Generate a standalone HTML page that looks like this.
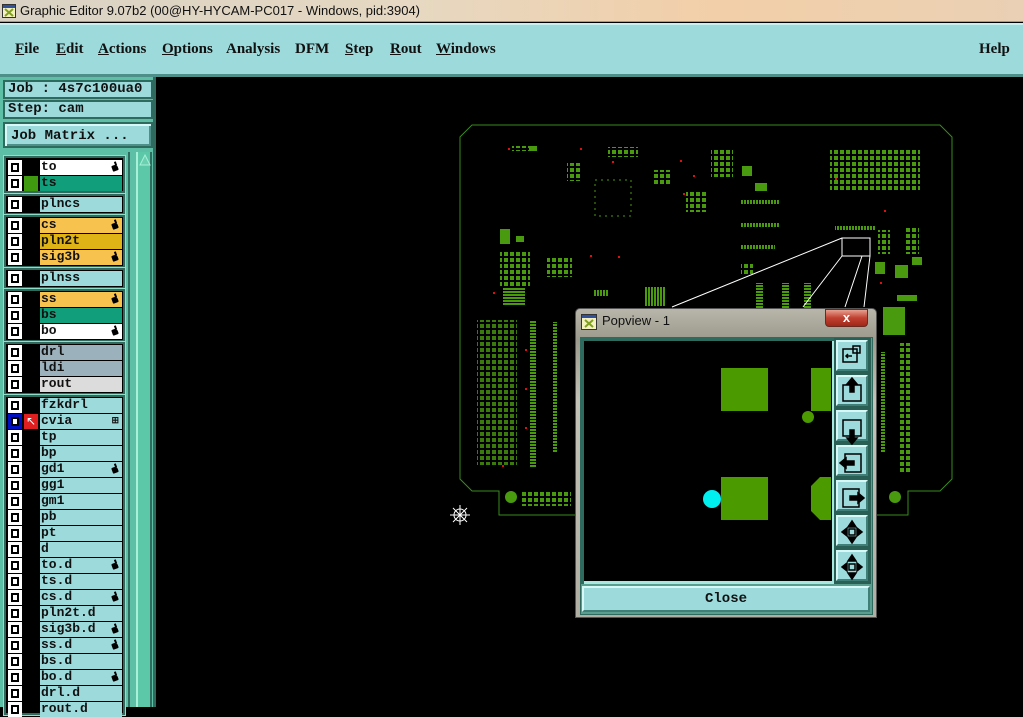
<!DOCTYPE html>
<html><head><meta charset="utf-8"><style>
*{margin:0;padding:0;box-sizing:border-box}
body{width:1023px;height:707px;overflow:hidden;background:#000;position:relative;font-family:"Liberation Sans",sans-serif}
.abs{position:absolute}
#title{left:0;top:0;width:1023px;height:22px;background:linear-gradient(90deg,#d9d2c4 0%,#e6d8c2 40%,#f2cfa8 70%,#ead0b4 100%);border-bottom:1px solid #9a9a9a}
#title span{position:absolute;left:20px;top:3px;font-size:13px;color:#111}
#menu{left:0;top:23px;width:1023px;height:54px;background:#9cdadb;border-top:2px solid #c8f0f0;border-bottom:3px solid #4f8f8a}
#menu b{position:absolute;top:16px;font:bold 15px "Liberation Serif",serif;color:#111}
#menu b u{text-decoration:underline}
#left{left:0;top:77px;width:155px;height:630px;background:#5cbfa6}
.fld{position:absolute;left:3px;width:150px;height:19px;background:#9cdadb;border:2px solid #2e6b5e;font:bold 14px "Liberation Mono",monospace;color:#111;padding-left:3px;line-height:15px}
.grp{position:absolute;left:4px;width:121px;background:#000;border:2px solid #2e6b5e;outline:1px solid #8fe0c8}
.r{position:absolute;left:8px;height:15px;width:114px}
.cb{position:absolute;left:0;top:0;width:14px;height:15px;background:#fff}
.cb i{position:absolute;left:3px;top:3px;width:8px;height:9px;border:2px solid #000}
.nm{position:absolute;left:32px;top:0;width:82px;height:15px;background:#9cdadb;font:bold 13px "Liberation Mono",monospace;color:#111;line-height:14px;padding-left:1px}
.nm em{position:absolute;right:4px;top:5px;width:6px;height:6px;background:#000;border-radius:1px 3px 1px 1px;transform:rotate(-20deg)}
.nm em:after{content:"";position:absolute;left:4px;top:-3px;width:2px;height:4px;background:#000}
</style></head><body>
<div id="title" class="abs"><svg class="abs" style="left:2px;top:4px" width="14" height="14"><rect x="0.5" y="0.5" width="13" height="13" fill="#f4f0c0" stroke="#333"/><rect x="1" y="1" width="12" height="3" fill="#3050a0"/><path d="M3 5 L11 12 M11 5 L3 12" stroke="#80a020" stroke-width="2"/></svg><span>Graphic Editor 9.07b2 (00@HY-HYCAM-PC017 - Windows, pid:3904)</span></div>
<div id="menu" class="abs">
<b style="left:15px"><u>F</u>ile</b><b style="left:56px"><u>E</u>dit</b><b style="left:98px"><u>A</u>ctions</b><b style="left:162px"><u>O</u>ptions</b><b style="left:226px">Analysis</b><b style="left:295px">DFM</b><b style="left:345px"><u>S</u>tep</b><b style="left:390px"><u>R</u>out</b><b style="left:436px"><u>W</u>indows</b><b style="left:979px">Help</b>
</div>
<div id="left" class="abs"></div>
<div class="fld" style="top:80px">Job : 4s7c100ua0</div>
<div class="fld" style="top:100px">Step: cam</div>
<div class="abs" style="left:3px;top:122px;width:150px;height:26px;background:#9cdadb;border:2px solid #2e6b5e;box-shadow:inset 2px 2px #d8f8f8,inset -2px -2px #4f8f8a;font:bold 14px 'Liberation Mono',monospace;padding:4px 0 0 6px;color:#111">Job Matrix ...</div>
<div class="abs" style="left:128px;top:152px;width:26px;height:555px;background:#5cbfa6;border-left:2px solid #2e6b5e"></div>
<div class="abs" style="left:136px;top:152px;width:16px;height:555px;background:#5cc8a8;border-left:2px solid #a8f0d8;border-right:2px solid #2e6b5e"></div>
<svg class="abs" style="left:139px;top:154px" width="12" height="12"><path d="M6 1 L11 11 L1 11Z" fill="#6ad0b0" stroke="#a8f0d8"/></svg>
<div class="abs" style="left:153px;top:77px;width:3px;height:630px;background:#2e6b5e"></div>

<div class="grp" style="top:156px;height:37px"></div>
<div class="grp" style="top:194px;height:21px"></div>
<div class="grp" style="top:215px;height:53px"></div>
<div class="grp" style="top:268px;height:21px"></div>
<div class="grp" style="top:289px;height:53px"></div>
<div class="grp" style="top:342px;height:53px"></div>
<div class="grp" style="top:395px;height:320px"></div>

<div class="r" style="top:160px"><div class="cb"><i></i></div><div class="nm" style="background:#fff">to<em></em></div></div>
<div class="r" style="top:176px"><div class="cb"><i></i></div><div class="abs" style="left:16px;top:0;width:14px;height:15px;background:#3f9a10"></div><div class="nm" style="background:#119e7a">ts</div></div>
<div class="r" style="top:197px"><div class="cb"><i></i></div><div class="nm">plncs</div></div>
<div class="r" style="top:218px"><div class="cb"><i></i></div><div class="nm" style="background:#f8c24f">cs<em></em></div></div>
<div class="r" style="top:234px"><div class="cb"><i></i></div><div class="nm" style="background:#dfb316">pln2t</div></div>
<div class="r" style="top:250px"><div class="cb"><i></i></div><div class="nm" style="background:#f8c24f">sig3b<em></em></div></div>
<div class="r" style="top:271px"><div class="cb"><i></i></div><div class="nm">plnss</div></div>
<div class="r" style="top:292px"><div class="cb"><i></i></div><div class="nm" style="background:#f8c24f">ss<em></em></div></div>
<div class="r" style="top:308px"><div class="cb"><i></i></div><div class="nm" style="background:#119e7a">bs</div></div>
<div class="r" style="top:324px"><div class="cb"><i></i></div><div class="nm" style="background:#fff">bo<em></em></div></div>
<div class="r" style="top:345px"><div class="cb"><i></i></div><div class="nm" style="background:#9bb1bb">drl</div></div>
<div class="r" style="top:361px"><div class="cb"><i></i></div><div class="nm" style="background:#9bb1bb">ldi</div></div>
<div class="r" style="top:377px"><div class="cb"><i></i></div><div class="nm" style="background:#dcdcdc">rout</div></div>
<div class="r" style="top:398px"><div class="cb"><i></i></div><div class="nm">fzkdrl</div></div>
<div class="r" style="top:414px"><div class="cb" style="background:#0010c0"><i style="background:#fff"></i></div><div class="abs" style="left:16px;top:0;width:14px;height:15px;background:#e02020;color:#fff;font-size:12px;line-height:15px;text-align:center">&#8598;</div><div class="nm">cvia<span style="position:absolute;right:3px;top:0;font-size:9px">&#8862;</span></div></div>
<div class="r" style="top:430px"><div class="cb"><i></i></div><div class="nm">tp</div></div>
<div class="r" style="top:446px"><div class="cb"><i></i></div><div class="nm">bp</div></div>
<div class="r" style="top:462px"><div class="cb"><i></i></div><div class="nm">gd1<em></em></div></div>
<div class="r" style="top:478px"><div class="cb"><i></i></div><div class="nm">gg1</div></div>
<div class="r" style="top:494px"><div class="cb"><i></i></div><div class="nm">gm1</div></div>
<div class="r" style="top:510px"><div class="cb"><i></i></div><div class="nm">pb</div></div>
<div class="r" style="top:526px"><div class="cb"><i></i></div><div class="nm">pt</div></div>
<div class="r" style="top:542px"><div class="cb"><i></i></div><div class="nm">d</div></div>
<div class="r" style="top:558px"><div class="cb"><i></i></div><div class="nm">to.d<em></em></div></div>
<div class="r" style="top:574px"><div class="cb"><i></i></div><div class="nm">ts.d</div></div>
<div class="r" style="top:590px"><div class="cb"><i></i></div><div class="nm">cs.d<em></em></div></div>
<div class="r" style="top:606px"><div class="cb"><i></i></div><div class="nm">pln2t.d</div></div>
<div class="r" style="top:622px"><div class="cb"><i></i></div><div class="nm">sig3b.d<em></em></div></div>
<div class="r" style="top:638px"><div class="cb"><i></i></div><div class="nm">ss.d<em></em></div></div>
<div class="r" style="top:654px"><div class="cb"><i></i></div><div class="nm">bs.d</div></div>
<div class="r" style="top:670px"><div class="cb"><i></i></div><div class="nm">bo.d<em></em></div></div>
<div class="r" style="top:686px"><div class="cb"><i></i></div><div class="nm">drl.d</div></div>
<div class="r" style="top:702px"><div class="cb"><i></i></div><div class="nm">rout.d</div></div>

<svg class="abs" style="left:0;top:0" width="1023" height="707">
<defs>
<pattern id="pd" width="6" height="6" patternUnits="userSpaceOnUse"><rect width="4" height="4" fill="#4a9a10"/></pattern>
<pattern id="pv" width="3" height="6" patternUnits="userSpaceOnUse"><rect width="2" height="6" fill="#4a9a10"/></pattern>
<pattern id="ph" width="6" height="3" patternUnits="userSpaceOnUse"><rect width="6" height="2" fill="#4a9a10"/></pattern>
</defs>
<path d="M472 125 H940 L952 137 V479 L940 491 H908 V515 H499 V491 H472 L460 479 V137 Z" fill="none" stroke="#3a8a20" stroke-width="1"/>
<g fill="#4a9a10">
<rect x="512" y="146" width="18" height="5" fill="url(#pd)"/><rect x="529" y="146" width="8" height="5"/>
<rect x="608" y="147" width="30" height="10" fill="url(#pd)"/>
<rect x="711" y="149" width="22" height="28" fill="url(#pd)"/>
<rect x="567" y="163" width="14" height="18" fill="url(#pd)"/>
<rect x="595" y="180" width="36" height="36" fill="none" stroke="#4a9a10" stroke-dasharray="2 4"/>
<rect x="652" y="170" width="20" height="14" fill="url(#pd)"/><rect x="686" y="192" width="22" height="20" fill="url(#pd)"/>
<rect x="740" y="200" width="40" height="4" fill="url(#pv)"/><rect x="740" y="223" width="40" height="4" fill="url(#pv)"/>
<rect x="742" y="166" width="10" height="10"/><rect x="755" y="183" width="12" height="8"/>
<rect x="500" y="229" width="10" height="15"/><rect x="516" y="236" width="8" height="6"/>
<rect x="500" y="252" width="30" height="36" fill="url(#pd)"/><rect x="547" y="257" width="25" height="20" fill="url(#pd)"/>
<rect x="503" y="287" width="22" height="18" fill="url(#ph)"/>
<rect x="644" y="287" width="22" height="19" fill="url(#pv)"/><rect x="593" y="290" width="16" height="6" fill="url(#pv)"/>
<rect x="741" y="245" width="34" height="4" fill="url(#pv)"/><rect x="741" y="263" width="12" height="12" fill="url(#pd)"/>
<rect x="756" y="283" width="7" height="25" fill="url(#ph)"/><rect x="782" y="283" width="7" height="25" fill="url(#ph)"/><rect x="804" y="283" width="7" height="25" fill="url(#ph)"/>
<rect x="830" y="150" width="90" height="42" fill="url(#pd)"/>
<rect x="835" y="226" width="40" height="4" fill="url(#pv)"/><rect x="878" y="230" width="12" height="24" fill="url(#pd)"/><rect x="905" y="228" width="14" height="26" fill="url(#pd)"/>
<rect x="875" y="262" width="10" height="12"/><rect x="895" y="265" width="13" height="13"/><rect x="912" y="257" width="10" height="8"/>
<rect x="883" y="307" width="22" height="28"/><rect x="897" y="295" width="20" height="6"/>
<rect x="477" y="320" width="40" height="145" fill="url(#pd)" opacity="0.8"/>
<rect x="530" y="320" width="6" height="147" fill="url(#ph)"/>
<rect x="553" y="322" width="4" height="130" fill="url(#ph)"/><rect x="899" y="343" width="12" height="130" fill="url(#pd)"/><rect x="881" y="352" width="4" height="100" fill="url(#ph)"/>
<rect x="521" y="490" width="50" height="16" fill="url(#pd)"/>
<circle cx="511" cy="497" r="6"/><circle cx="895" cy="497" r="6"/>
</g>
<g fill="#e01010"><rect x="508" y="148" width="2" height="2"/><rect x="580" y="148" width="2" height="2"/><rect x="612" y="161" width="2" height="2"/><rect x="680" y="160" width="2" height="2"/><rect x="693" y="175" width="2" height="2"/><rect x="683" y="193" width="2" height="2"/><rect x="590" y="255" width="2" height="2"/><rect x="493" y="292" width="2" height="2"/><rect x="618" y="256" width="2" height="2"/><rect x="835" y="178" width="2" height="2"/><rect x="884" y="210" width="2" height="2"/><rect x="880" y="282" width="2" height="2"/><rect x="525" y="349" width="2" height="2"/><rect x="525" y="388" width="2" height="2"/><rect x="525" y="427" width="2" height="2"/><rect x="502" y="465" width="2" height="2"/></g>
<rect x="842" y="238" width="28" height="18" fill="none" stroke="#fff"/>
<path d="M842 238 L672 307 M842 256 L803 307 M862 256 L845 307 M870 256 L864 307" stroke="#fff" stroke-width="1"/>
<g stroke="#fff" stroke-width="1" fill="none"><circle cx="460" cy="515" r="6"/><path d="M450 515 H470 M460 505 V525 M453 508 L467 522 M467 508 L453 522"/></g>
</svg>

<div class="abs" style="left:575px;top:308px;width:302px;height:310px;background:linear-gradient(180deg,#b8b6aa 0%,#9c9a8c 10%,#c4c2b6 30%,#b0aea2 100%);border:1px solid #555;border-radius:5px 5px 0 0"></div>
<svg class="abs" style="left:581px;top:314px" width="16" height="16"><rect x="0.5" y="0.5" width="15" height="15" fill="#f4f0c0" stroke="#333"/><rect x="1" y="1" width="14" height="3" fill="#3050a0"/><path d="M4 6 L12 13 M12 6 L4 13" stroke="#80a020" stroke-width="2"/></svg>
<div class="abs" style="left:602px;top:313px;font-size:13px;color:#111">Popview - 1</div>
<div class="abs" style="left:825px;top:309px;width:43px;height:18px;background:linear-gradient(180deg,#e8a090,#c04030 50%,#a02818);border:1px solid #6a2a20;border-radius:0 0 4px 4px;color:#fff;font:bold 13px 'Liberation Sans',sans-serif;text-align:center;line-height:16px">x</div>
<div class="abs" style="left:580px;top:337px;width:293px;height:278px;background:#5a9e90;border:1px solid #2e6b5e"></div>
<div class="abs" style="left:581px;top:338px;width:253px;height:246px;background:#a8e8e0;border-top:3px solid #2e6b5e;border-left:3px solid #2e6b5e"></div>
<svg class="abs" style="left:584px;top:341px" width="248" height="240"><rect width="248" height="240" fill="#000"/>
<g fill="#4a9a00"><rect x="137" y="27" width="47" height="43"/><rect x="227" y="27" width="20" height="43"/><circle cx="224" cy="76" r="6"/><rect x="137" y="136" width="47" height="43"/><path d="M236 136 H247 V179 H236 L227 170 V145 Z"/></g>
<circle cx="128" cy="158" r="9" fill="#00f0f0"/></svg>
<div class="abs" style="left:834px;top:338px;width:37px;height:246px;background:#2a5f55"></div>
<div class="abs" style="left:836px;top:340px;width:32px;height:31px;background:#9cdadb;border:2px solid #d8f8f8;border-right-color:#3f7f78;border-bottom-color:#3f7f78"></div>
<div class="abs" style="left:836px;top:375px;width:32px;height:31px;background:#9cdadb;border:2px solid #d8f8f8;border-right-color:#3f7f78;border-bottom-color:#3f7f78"></div>
<div class="abs" style="left:836px;top:410px;width:32px;height:31px;background:#9cdadb;border:2px solid #d8f8f8;border-right-color:#3f7f78;border-bottom-color:#3f7f78"></div>
<div class="abs" style="left:836px;top:445px;width:32px;height:31px;background:#9cdadb;border:2px solid #d8f8f8;border-right-color:#3f7f78;border-bottom-color:#3f7f78"></div>
<div class="abs" style="left:836px;top:480px;width:32px;height:31px;background:#9cdadb;border:2px solid #d8f8f8;border-right-color:#3f7f78;border-bottom-color:#3f7f78"></div>
<div class="abs" style="left:836px;top:515px;width:32px;height:31px;background:#9cdadb;border:2px solid #d8f8f8;border-right-color:#3f7f78;border-bottom-color:#3f7f78"></div>
<div class="abs" style="left:836px;top:550px;width:32px;height:31px;background:#9cdadb;border:2px solid #d8f8f8;border-right-color:#3f7f78;border-bottom-color:#3f7f78"></div>
<svg class="abs" style="left:836px;top:340px" width="32" height="245" fill="none" stroke="#000" stroke-width="1.5">
<rect x="7" y="9" width="14" height="13"/><rect x="17" y="6" width="7" height="7"/><path d="M16 16 H10 M12 14 L10 16 L12 18"/>
<rect x="7" y="45" width="18" height="16"/><path d="M16 38 L11 44 H14 V52 H18 V44 H21 Z" fill="#000"/>
<rect x="7" y="80" width="18" height="16"/><path d="M16 104 L11 98 H14 V90 H18 V98 H21 Z" fill="#000"/>
<rect x="9" y="114" width="16" height="18"/><path d="M4 123 L10 118 V121 H18 V125 H10 V128 Z" fill="#000"/>
<rect x="7" y="149" width="16" height="18"/><path d="M28 158 L22 153 V156 H14 V160 H22 V163 Z" fill="#000"/>
<rect x="13" y="189" width="6" height="6"/><path d="M16 181 L12 187 H20Z M16 203 L12 197 H20Z M6 192 L11 188 V196Z M26 192 L21 188 V196Z" fill="#000"/>
<rect x="13" y="224" width="6" height="6"/><path d="M16 215 L12 221 H20Z M16 239 L12 233 H20Z M6 227 L11 223 V231Z M26 227 L21 223 V231Z" fill="#000"/>
</svg>
<div class="abs" style="left:582px;top:586px;width:288px;height:26px;background:#9cdadb;border:2px solid #d8f8f8;border-right-color:#3f7f78;border-bottom-color:#3f7f78;text-align:center;font:bold 14px 'Liberation Mono',monospace;line-height:22px;color:#111">Close</div>
</body></html>
